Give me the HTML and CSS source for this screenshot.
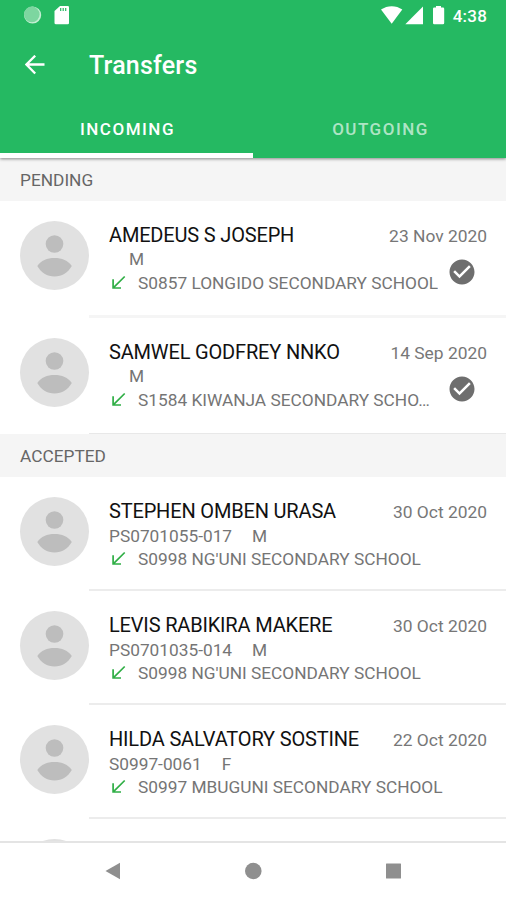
FILE: index.html
```html
<!DOCTYPE html>
<html lang="en">
<head>
    <meta charset="UTF-8">
    <title>Transfers</title>
    <link rel="stylesheet" href="styles.css">
</head>
<body>
    <svg width="0" height="0" class="symbols">
        <symbol id="person" viewBox="0 0 69 69">
            <circle cx="34.5" cy="23" r="8.8"/>
            <path d="M17.3 45C21 39.500 27 37 34.5 37S48 39.500 51.8 45C48 51.5 42 55.5 34.5 55.5S21 51.5 17.3 45z"/>
        </symbol>
        <symbol id="arrow" viewBox="0 0 20 20">
            <path d="M15.7 3.5L4.5 14.700M4.1 6.3V15H12" fill="none" stroke="#2fae45" stroke-width="1.7"/>
        </symbol>
        <symbol id="check" viewBox="0 0 24 24">
            <path d="M12 2C6.48 2 2 6.48 2 12s4.48 10 10 10 10-4.48 10-10S17.52 2 12 2zm-2 15l-5-5 1.41-1.41L10 14.17l7.59-7.59L19 8l-9 9z"/>
        </symbol>
    </svg>
    <div class="screen">
        <header class="app-bar">
            <div class="status-bar">
                <svg class="status-left" width="46" height="20" viewBox="0 0 46 20">
                    <circle cx="8.6" cy="10" r="8.6" fill="#c4efd3"/>
                    <circle cx="7.8" cy="9.4" r="7.8" fill="#7dd6a0"/>
                    <path d="M36 1h7.7q1.3 0 1.3 1.3v15.6q0 1.3-1.3 1.3H32q-1.500 0-1.500-1.3V6z" fill="#fff"/>
                    <path d="M36.7 3v3M39.2 3v3M41.7 3v3" stroke="#25b962" stroke-width="1.2"/>
                </svg>
                <svg class="status-right" width="64" height="20" viewBox="0 0 64 20" fill="#fff">
                    <path d="M0 4.5C6.5 0 15 0 21.3 4.5L10.7 18.7z"/>
                    <path d="M42 1.5V19.3H24.3z"/>
                    <path d="M55 1h5v1.5h2q1.2 0 1.2 1.2v14.4q0 1.2-1.2 1.2h-8.8q-1.2 0-1.2-1.2V3.7q0-1.2 1.2-1.2H55z"/>
                </svg>
                <span class="clock">4:38</span>
            </div>
            <div class="toolbar">
                <svg class="back" width="20" height="20" viewBox="0 0 20 20">
                    <path d="M19.5 9.5H2M10.2 .7L1.4 9.5l8.8 9" fill="none" stroke="#fff" stroke-width="2.3"/>
                </svg>
                <h1>Transfers</h1>
            </div>
            <nav class="tabs">
                <a class="tab active">INCOMING</a>
                <a class="tab">OUTGOING</a>
            </nav>
        </header>

        <main class="list">
            <h2 class="section">PENDING</h2>
            <article class="item pending">
                <svg class="avatar"><use href="#person"/></svg>
                <div class="content">
                    <div class="row">
                        <span class="name">AMEDEUS S JOSEPH</span>
                        <time>23 Nov 2020</time>
                    </div>
                    <div class="row">
                        <div class="details">
                            <div class="meta"><span class="sex">M</span></div>
                            <div class="school"><svg class="arrow"><use href="#arrow"/></svg><span>S0857 LONGIDO SECONDARY SCHOOL</span></div>
                        </div>
                        <svg class="check"><use href="#check"/></svg>
                    </div>
                </div>
            </article>
            <article class="item pending last">
                <svg class="avatar"><use href="#person"/></svg>
                <div class="content">
                    <div class="row">
                        <span class="name">SAMWEL GODFREY NNKO</span>
                        <time>14 Sep 2020</time>
                    </div>
                    <div class="row">
                        <div class="details">
                            <div class="meta"><span class="sex">M</span></div>
                            <div class="school"><svg class="arrow"><use href="#arrow"/></svg><span>S1584 KIWANJA SECONDARY SCHO…</span></div>
                        </div>
                        <svg class="check"><use href="#check"/></svg>
                    </div>
                </div>
            </article>

            <h2 class="section">ACCEPTED</h2>
            <article class="item">
                <svg class="avatar"><use href="#person"/></svg>
                <div class="content">
                    <div class="row">
                        <span class="name">STEPHEN OMBEN URASA</span>
                        <time>30 Oct 2020</time>
                    </div>
                    <div class="details">
                        <div class="meta">PS0701055-017<span class="sex">M</span></div>
                        <div class="school"><svg class="arrow"><use href="#arrow"/></svg><span>S0998 NG'UNI SECONDARY SCHOOL</span></div>
                    </div>
                </div>
            </article>
            <article class="item">
                <svg class="avatar"><use href="#person"/></svg>
                <div class="content">
                    <div class="row">
                        <span class="name">LEVIS RABIKIRA MAKERE</span>
                        <time>30 Oct 2020</time>
                    </div>
                    <div class="details">
                        <div class="meta">PS0701035-014<span class="sex">M</span></div>
                        <div class="school"><svg class="arrow"><use href="#arrow"/></svg><span>S0998 NG'UNI SECONDARY SCHOOL</span></div>
                    </div>
                </div>
            </article>
            <article class="item">
                <svg class="avatar"><use href="#person"/></svg>
                <div class="content">
                    <div class="row">
                        <span class="name">HILDA SALVATORY SOSTINE</span>
                        <time>22 Oct 2020</time>
                    </div>
                    <div class="details">
                        <div class="meta">S0997-0061<span class="sex">F</span></div>
                        <div class="school"><svg class="arrow"><use href="#arrow"/></svg><span>S0997 MBUGUNI SECONDARY SCHOOL</span></div>
                    </div>
                </div>
            </article>
            <article class="item">
                <svg class="avatar"><use href="#person"/></svg>
            </article>
        </main>

        <footer class="nav-bar">
            <svg width="18" height="18" viewBox="0 0 18 18"><path d="M1.5 9L16 .8v16.4z"/></svg>
            <svg width="18" height="18" viewBox="0 0 18 18"><circle cx="9.3" cy="9" r="8.3"/></svg>
            <svg width="18" height="18" viewBox="0 0 18 18"><rect x="2" y="1.5" width="15" height="15" rx=".5"/></svg>
        </footer>
    </div>
</body>
</html>
```

FILE: styles.css
```css
* {
    box-sizing: border-box;
}

body {
    margin: 0;
    font-family: Roboto, sans-serif;
    background: #fff;
}

.symbols {
    display: none;
}

.screen {
    display: flex;
    flex-direction: column;
    width: 506px;
    height: 900px;
    overflow: hidden;
}

.app-bar {
    flex: none;
    height: 158px;
    background: #25b962;
    color: #fff;
    box-shadow: 0 1px 3px rgba(0, 0, 0, 0.45);
    z-index: 1;
}

.status-bar {
    display: flex;
    align-items: center;
    height: 30px;
    padding: 0 19px 0 24px;
}

.status-right {
    margin-left: auto;
}

.clock {
    margin-left: 8px;
    font-size: 17px;
    line-height: 30px;
    padding-top: 1px;
    font-weight: 500;
    letter-spacing: 0.2px;
}

.toolbar {
    display: flex;
    align-items: center;
    height: 70px;
    padding-left: 25px;
}

h1 {
    margin: 1px 0 0 44px;
    font-size: 25px;
    font-weight: 500;
    letter-spacing: 0.2px;
}

.tabs {
    display: flex;
    height: 58px;
}

.tab {
    flex: 1;
    padding-left: 2px;
    border-bottom: 5px solid transparent;
    line-height: 59px;
    text-align: center;
    font-size: 17px;
    font-weight: 500;
    letter-spacing: 1.5px;
    color: rgba(255, 255, 255, 0.65);
}

.tab.active {
    color: #fff;
    border-color: #fff;
}

.list {
    flex: 1;
    min-height: 0;
    overflow: hidden;
}

.section {
    margin: 0;
    height: 43px;
    padding-left: 20px;
    background: #f5f5f5;
    color: #666;
    font-size: 17.3px;
    font-weight: 400;
    line-height: 45px;
}

.item {
    display: flex;
    height: 114px;
    padding-left: 20px;
}

.item.pending {
    height: 117px;
}

.item.pending.last {
    height: 116px;
}

.avatar {
    flex: none;
    width: 69px;
    height: 69px;
    margin-top: 20px;
    border-radius: 50%;
    background: #e1e1e1;
    fill: #bdbdbd;
}

.content {
    flex: 1;
    min-width: 0;
    padding: 20px 19px 0 20px;
    border-bottom: 2px solid #ececec;
}

.pending .content {
    border-bottom: 3px solid #f5f5f5;
}

.pending.last .content {
    border-bottom: 1px solid #e8e8e8;
}

.row {
    display: flex;
    justify-content: space-between;
}

.name {
    color: #111;
    font-size: 20px;
    letter-spacing: -0.17px;
    line-height: 28px;
    white-space: nowrap;
}

time {
    color: #777;
    font-size: 17.4px;
    line-height: 30px;
    height: 28px;
}

.details {
    min-width: 0;
    color: #757575;
    font-size: 17.3px;
}

.meta {
    height: 22px;
    line-height: 22px;
}

.pending .meta {
    line-height: 21px;
}

.sex {
    margin-left: 20px;
}

.school {
    display: flex;
    align-items: center;
    line-height: 24px;
}

.school span {
    overflow: hidden;
    white-space: nowrap;
    text-overflow: ellipsis;
}

.arrow {
    flex: none;
    width: 20px;
    height: 20px;
    margin-right: 9px;
}

.check {
    flex: none;
    width: 30px;
    height: 30px;
    margin: 8px 10px 0 6px;
    fill: #6e6e6e;
}

.nav-bar {
    flex: none;
    display: flex;
    justify-content: center;
    gap: 122px;
    height: 59px;
    padding-top: 19px;
    border-top: 2px solid #e4e4e4;
    background: #fff;
    fill: #8f8f8f;
}
```
